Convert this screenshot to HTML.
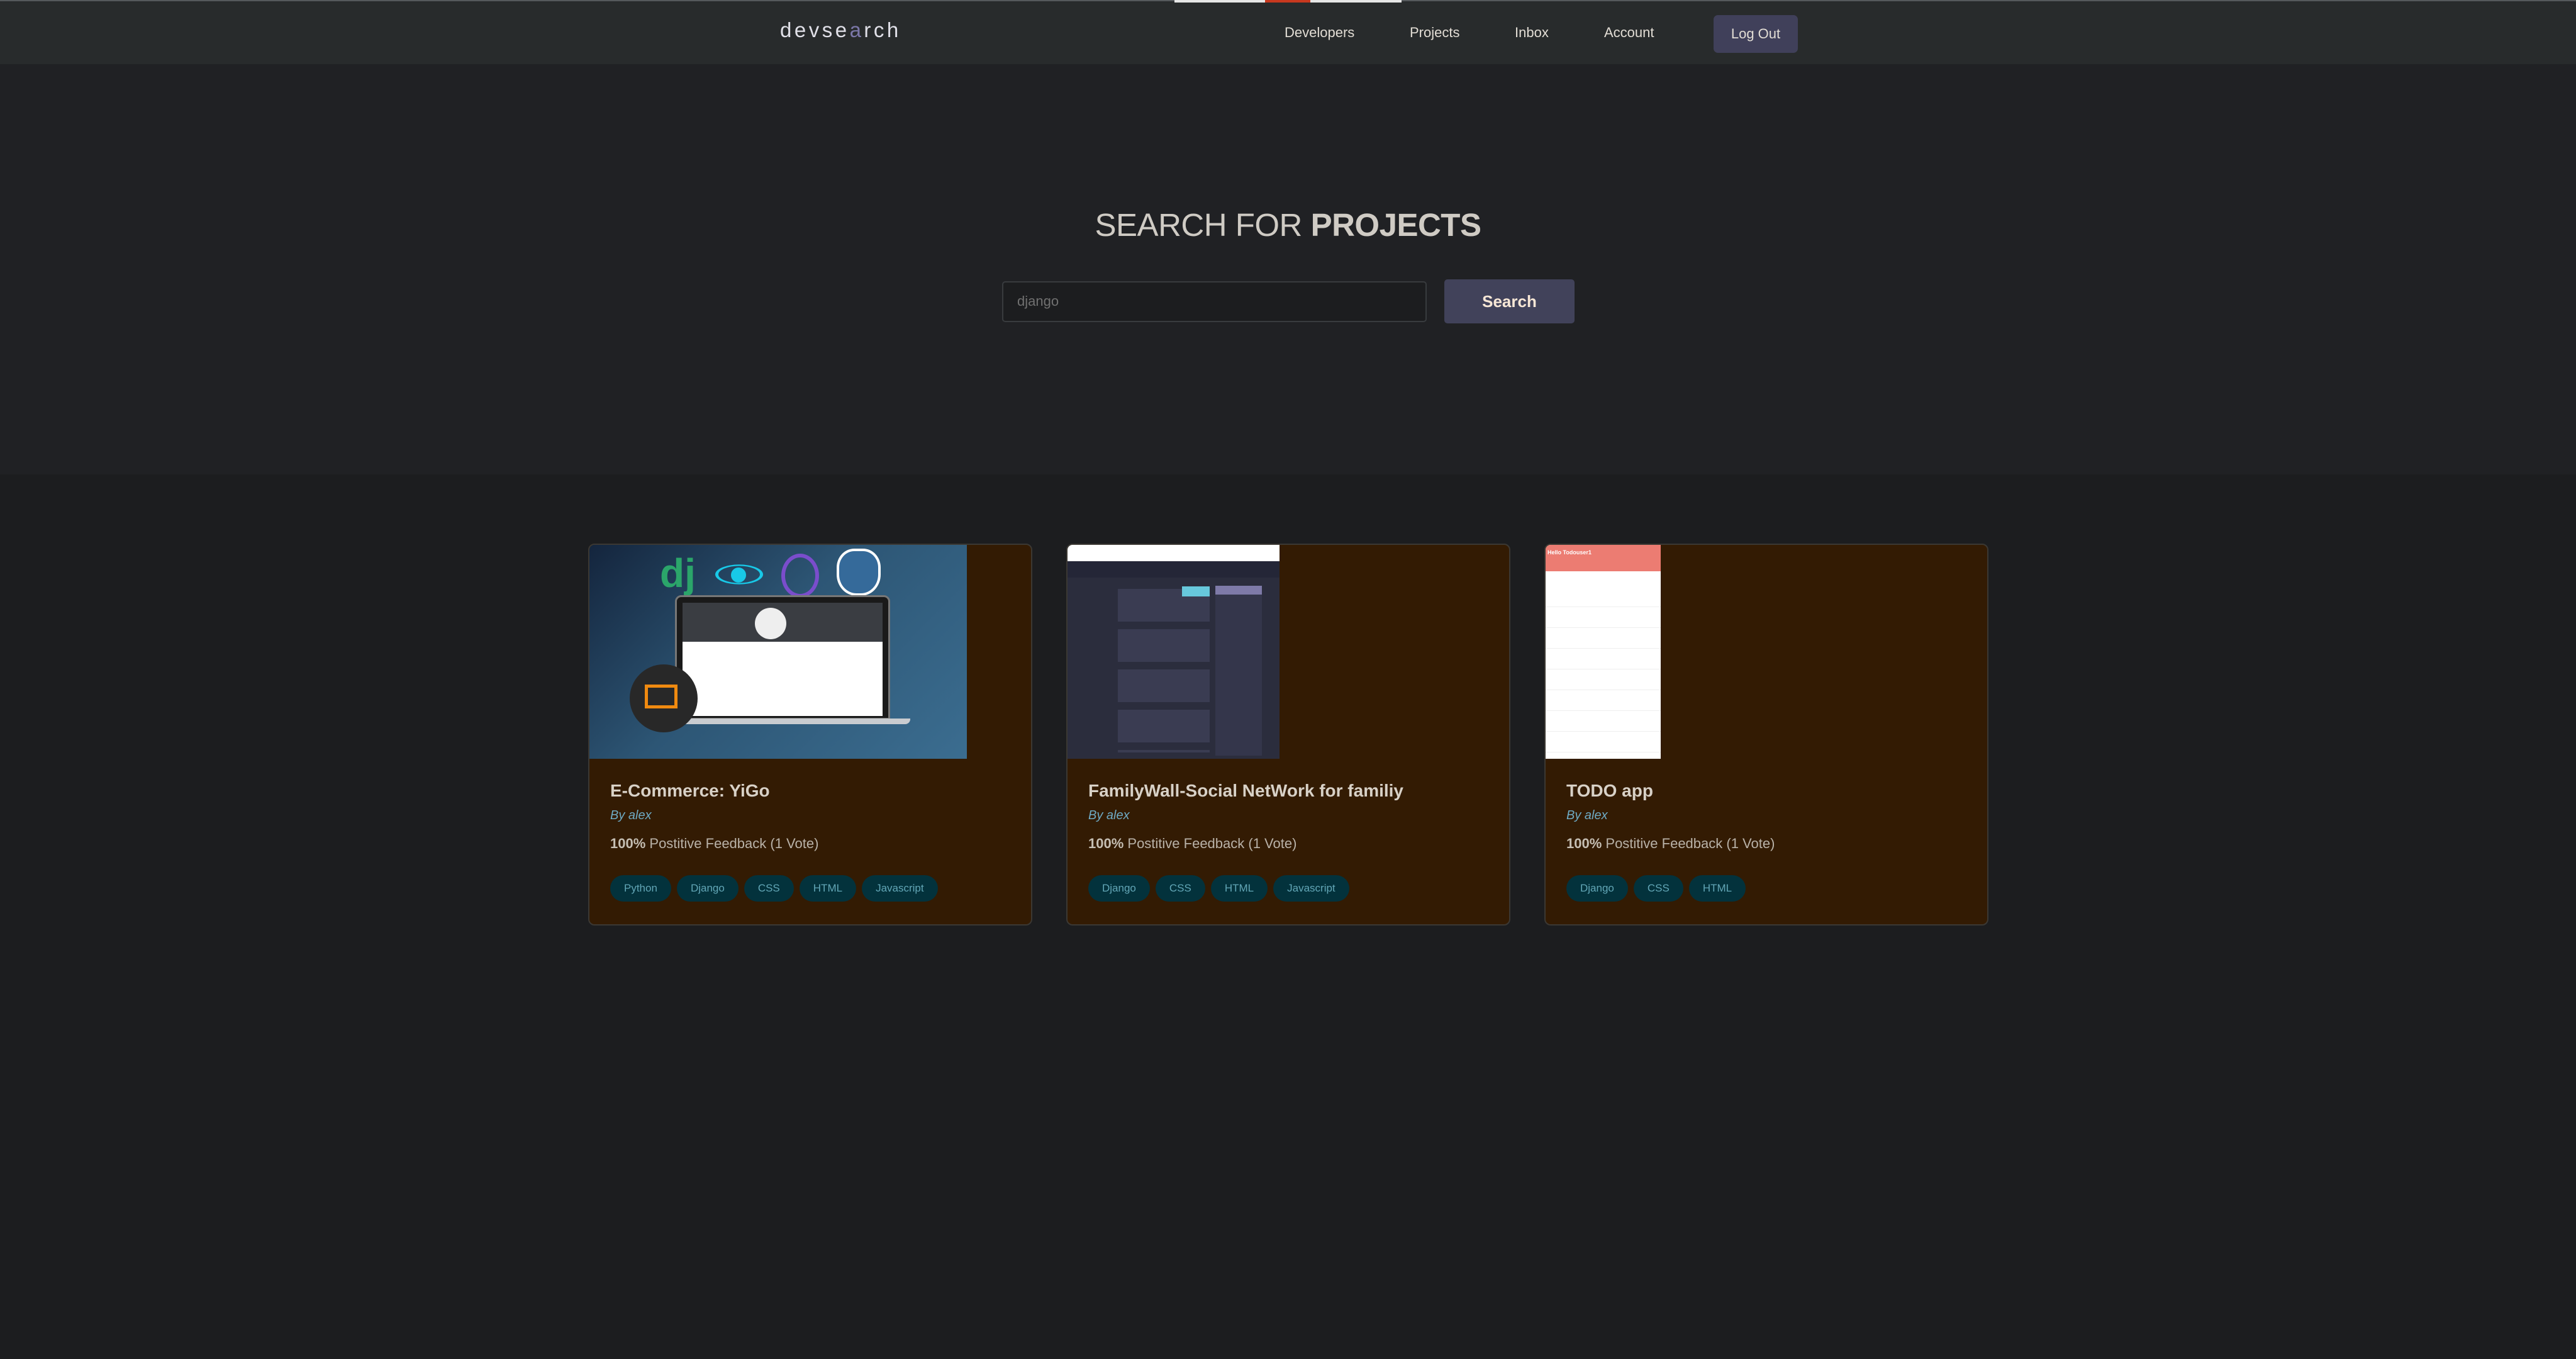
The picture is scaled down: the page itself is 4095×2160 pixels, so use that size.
<!DOCTYPE html>
<html><head><meta charset="utf-8"><style>
*{box-sizing:border-box;margin:0;padding:0}
html,body{width:4095px;height:2160px;overflow:hidden}
body{background:#1c1d1f;font-family:"Liberation Sans",sans-serif;position:relative}
.nav{position:absolute;left:0;top:0;width:4095px;height:102px;background:#282b2c;border-top:2px solid #55595c}
.bar{position:absolute;top:-2px;left:1867px;width:361px;height:4px;background:#e6e6e6}
.bar i{display:block;position:absolute;left:144px;top:0;width:72px;height:4px;background:#c8381f}
.logo{position:absolute;left:1240px;top:27px;font-size:33px;letter-spacing:4.5px;color:#e0e0e8;font-weight:normal}
.nl{position:absolute;top:37px;font-size:22px;color:#e2ddd5}
.lo{position:absolute;left:2724px;top:22px;width:134px;height:60px;background:#40405a;border-radius:7px;color:#e2ddd5;font-size:22px;text-align:center;line-height:60px}
.hero{position:absolute;left:0;top:102px;width:4095px;height:652px;background:#202124}
h1{position:absolute;left:0;width:4095px;top:328px;text-align:center;font-size:51px;font-weight:normal;color:#cfcbc4;letter-spacing:-0.5px}
h1 b{font-weight:bold}
.inp{position:absolute;left:1593px;top:447px;width:675px;height:65px;border:2px solid #383b3e;border-radius:5px;background:#1c1d1f;color:#707070;font-size:22px;padding-left:22px;line-height:60px}
.btn{position:absolute;left:2296px;top:444px;width:207px;height:70px;border-radius:5px;background:#41425a;color:#f7e7d6;font-weight:bold;font-size:26px;text-align:center;line-height:70px}
.card{position:absolute;top:864px;width:706px;height:607px;background:#331b03;border:2px solid #3b3833;border-radius:10px;overflow:hidden}
.img{position:absolute;left:0;top:0;height:340px;overflow:hidden}
.ct{position:absolute;left:33px;top:375px;font-size:28px;font-weight:bold;color:#d8d1c7}
.by{position:absolute;left:33px;top:419px;font-size:20px;font-style:italic;color:#6eaac4}
.fb{position:absolute;left:33px;top:462px;font-size:22px;color:#b9b2a8}
.fb b{color:#c6bfb4}
.tags{position:absolute;left:33px;top:525px;display:flex;gap:9px}
.tags span{background:#03323c;color:#62a6b6;font-size:17px;height:42px;line-height:42px;padding:0 22px;border-radius:21px}
</style></head><body>
<div class="nav"><div class="bar"><i></i></div>
<div class="logo">devse<span style="color:#7b77a8">a</span>rch</div>
<div class="nl" style="left:2042px">Developers</div>
<div class="nl" style="left:2241px">Projects</div>
<div class="nl" style="left:2408px">Inbox</div>
<div class="nl" style="left:2550px">Account</div>
<div class="lo">Log Out</div>
</div>
<div class="hero"></div>
<h1>SEARCH FOR <b>PROJECTS</b></h1>
<div class="inp">django</div>
<div class="btn">Search</div>

<div class="card" style="left:935px">
<div class="img" style="width:600px;background:linear-gradient(135deg,#14253d 0%,#2d5675 45%,#3b6d90 100%)">
<div style="position:absolute;left:112px;top:8px;font-size:64px;font-weight:bold;color:#2ba56a">dj</div>
<div style="position:absolute;left:200px;top:12px;width:76px;height:70px;border:5px solid #18c9e8;border-radius:50%;transform:scaleY(0.45)"></div>
<div style="position:absolute;left:225px;top:36px;width:24px;height:24px;background:#18c9e8;border-radius:50%"></div>
<div style="position:absolute;left:305px;top:14px;width:60px;height:70px;border:6px solid #7a4dcc;border-radius:50%"></div>
<div style="position:absolute;left:393px;top:6px;width:70px;height:75px;background:#356a9a;border:4px solid #fff;border-radius:40% 40% 45% 45%"></div>
<div style="position:absolute;left:136px;top:80px;width:342px;height:198px;background:#1a1a1a;border-radius:10px 10px 0 0;border:3px solid #777"></div>
<div style="position:absolute;left:148px;top:92px;width:318px;height:62px;background:#3a3d42"></div>
<div style="position:absolute;left:263px;top:100px;width:50px;height:50px;background:#eee;border-radius:50%"></div>
<div style="position:absolute;left:148px;top:154px;width:318px;height:118px;background:#fff"></div>
<div style="position:absolute;left:110px;top:276px;width:400px;height:9px;background:#c9ccd0;border-radius:0 0 8px 8px"></div>
<div style="position:absolute;left:64px;top:190px;width:108px;height:108px;background:#282828;border-radius:50%"></div>
<div style="position:absolute;left:88px;top:222px;width:52px;height:38px;border:5px solid #f08a10"></div>
</div>
<div class="ct">E-Commerce: YiGo</div><div class="by">By alex</div>
<div class="fb"><b>100%</b> Postitive Feedback (1 Vote)</div>
<div class="tags"><span>Python</span><span>Django</span><span>CSS</span><span>HTML</span><span>Javascript</span></div>
</div>

<div class="card" style="left:1695px">
<div class="img" style="width:337px;background:#2b2d3d">
<div style="height:26px;background:#fff"></div>
<div style="height:26px;background:#242637"></div>
<div style="position:absolute;left:80px;top:70px;width:146px;height:260px;background:repeating-linear-gradient(#3a3c52 0 52px,#2b2d3d 52px 64px)"></div>
<div style="position:absolute;left:235px;top:65px;width:74px;height:270px;background:#34364b"></div>
<div style="position:absolute;left:235px;top:65px;width:74px;height:14px;background:#7e7aa8"></div>
<div style="position:absolute;left:182px;top:66px;width:44px;height:16px;background:#67c8dc"></div>
</div>
<div class="ct">FamilyWall-Social NetWork for familiy</div><div class="by">By alex</div>
<div class="fb"><b>100%</b> Postitive Feedback (1 Vote)</div>
<div class="tags"><span>Django</span><span>CSS</span><span>HTML</span><span>Javascript</span></div>
</div>

<div class="card" style="left:2455px">
<div class="img" style="width:183px;background:repeating-linear-gradient(#fff 0 32px,#eee 32px 33px)">
<div style="height:42px;background:#ec7c72;color:#fff;font-size:9px;font-weight:bold;padding:7px 3px">Hello Todouser1</div>
<div style="height:30px;background:#fff"></div>
</div>
<div class="ct">TODO app</div><div class="by">By alex</div>
<div class="fb"><b>100%</b> Postitive Feedback (1 Vote)</div>
<div class="tags"><span>Django</span><span>CSS</span><span>HTML</span></div>
</div>
</body></html>
